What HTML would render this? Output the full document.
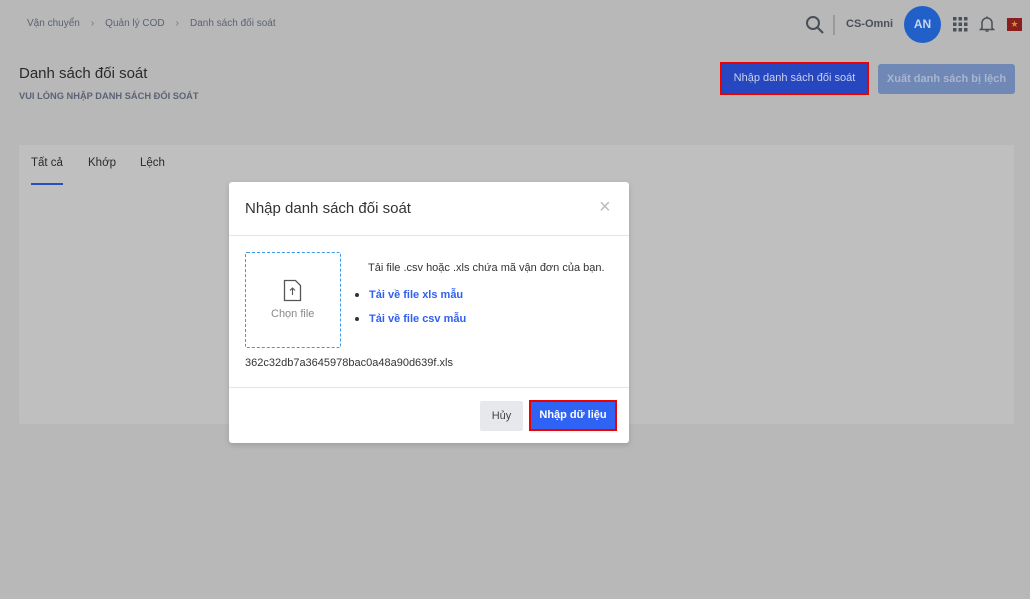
<!DOCTYPE html>
<html><head><meta charset="utf-8"><style>
*{box-sizing:border-box;margin:0;padding:0}
body{width:1030px;height:599px;background:#b8b8b8;font-family:"Liberation Sans",sans-serif;position:relative;overflow:hidden;color:#333}
.a{position:absolute}
.bc{top:18px;left:27px;font-size:10px;color:#5a6274}
.bc span{margin:0 11px;color:#777}
.title{top:65px;left:19px;font-size:15px;color:#2a2a2a}
.sub{top:91px;left:19px;font-size:9.3px;font-weight:bold;color:#5a6274}
.card{left:19px;top:145px;width:995px;height:279px;background:#bfbfbf;border-radius:2px}
.tab{top:157px;font-size:11.5px;color:#2a2a2a}
.btn1{left:720px;top:62px;width:149px;height:33px;background:#2647c0;border:2px solid #e00;color:#c9d2ee;font-size:11px;text-align:center;line-height:29px}
.btn2{left:878px;top:64px;width:137px;height:30px;background:#7088b5;border-radius:3px;color:#a9b6cf;font-size:11px;text-align:center;line-height:30px;font-weight:bold}
.modal{left:229px;top:182px;width:400px;height:261px;background:#fff;border-radius:3px;box-shadow:0 2px 6px rgba(0,0,0,.15)}
.link{color:#3060f0;font-weight:bold;font-size:11px}
</style></head><body>
<div class="a bc">Vận chuyển<span>›</span>Quản lý COD<span>›</span>Danh sách đối soát</div>
<svg class="a" style="left:805px;top:15px" width="20" height="20" viewBox="0 0 20 20"><circle cx="8" cy="8" r="6" fill="none" stroke="#4a4f5a" stroke-width="2"/><path d="M12.5 12.5L18 18" stroke="#4a4f5a" stroke-width="2.2"/></svg>
<div class="a" style="left:833px;top:15px;width:2px;height:20px;background:#9a9a9a"></div>
<div class="a" style="left:846px;top:18px;font-size:11px;font-weight:bold;color:#4a4f5a">CS-Omni</div>
<div class="a" style="left:904px;top:6px;width:37px;height:37px;border-radius:50%;background:#2160c8;color:#c9d6ee;font-size:12px;font-weight:bold;text-align:center;line-height:37px">AN</div>
<svg class="a" style="left:953px;top:17px" width="15" height="15"><g fill="#4a4f5a"><rect x="0" y="0" width="3.5" height="3.5"/><rect x="5.5" y="0" width="3.5" height="3.5"/><rect x="11" y="0" width="3.5" height="3.5"/><rect x="0" y="5.5" width="3.5" height="3.5"/><rect x="5.5" y="5.5" width="3.5" height="3.5"/><rect x="11" y="5.5" width="3.5" height="3.5"/><rect x="0" y="11" width="3.5" height="3.5"/><rect x="5.5" y="11" width="3.5" height="3.5"/><rect x="11" y="11" width="3.5" height="3.5"/></g></svg>
<svg class="a" style="left:979px;top:15px" width="16" height="18" viewBox="0 0 16 18"><path d="M3 13V8a5 5 0 0 1 10 0v5l1.5 1.5h-13z" fill="none" stroke="#4a4f5a" stroke-width="1.5"/><path d="M6.5 16h3" stroke="#4a4f5a" stroke-width="1.5"/><path d="M8 1.5v1.5" stroke="#4a4f5a" stroke-width="1.5"/></svg>
<div class="a" style="left:1007px;top:18px;width:15px;height:13px;background:#8a1e1e;color:#b8a020;font-size:9px;text-align:center;line-height:13px">★</div>
<div class="a title">Danh sách đối soát</div>
<div class="a sub">VUI LÒNG NHẬP DANH SÁCH ĐỐI SOÁT</div>
<div class="a btn1">Nhập danh sách đối soát</div>
<div class="a btn2">Xuất danh sách bị lệch</div>
<div class="a card"></div>
<div class="a tab" style="left:31px">Tất cả</div>
<div class="a" style="left:31px;top:183px;width:32px;height:2px;background:#2a50c0"></div>
<div class="a tab" style="left:88px">Khớp</div>
<div class="a tab" style="left:140px">Lệch</div>
<div class="a modal">
 <div class="a" style="left:16px;top:18px;font-size:15px;color:#333">Nhập danh sách đối soát</div>
 <div class="a" style="left:370px;top:14px;font-size:20px;color:#bbb;font-weight:300">×</div>
 <div class="a" style="left:0;top:53px;width:400px;height:1px;background:#e4e4e4"></div>
 <div class="a" style="left:16px;top:70px;width:96px;height:96px;border:1px dashed #3a9ae8;border-radius:2px"></div>
 <svg class="a" style="left:54px;top:97px" width="20" height="24" viewBox="0 0 20 24"><path d="M1.5 1.5h11l5 5v15h-16z" fill="none" stroke="#555" stroke-width="1.3"/><path d="M9.5 16V9M7 11.5l2.5-2.5 2.5 2.5" fill="none" stroke="#555" stroke-width="1.1"/></svg>
 <div class="a" style="left:42px;top:126px;font-size:11px;color:#888">Chọn file</div>
 <div class="a" style="left:139px;top:80px;font-size:11px;color:#333">Tải file .csv hoặc .xls chứa mã vận đơn của bạn.</div>
 <div class="a" style="left:126px;top:111px;width:4px;height:4px;border-radius:50%;background:#333"></div>
 <div class="a link" style="left:140px;top:108px;line-height:1">Tải về file xls mẫu</div>
 <div class="a" style="left:126px;top:135px;width:4px;height:4px;border-radius:50%;background:#333"></div>
 <div class="a link" style="left:140px;top:132px;line-height:1">Tải về file csv mẫu</div>
 <div class="a" style="left:16px;top:175px;font-size:11px;color:#333">362c32db7a3645978bac0a48a90d639f.xls</div>
 <div class="a" style="left:0;top:205px;width:400px;height:1px;background:#e4e4e4"></div>
 <div class="a" style="left:251px;top:219px;width:43px;height:30px;background:#e6e8ec;border-radius:2px;font-size:11px;color:#444;text-align:center;line-height:30px">Hủy</div>
 <div class="a" style="left:300px;top:218px;width:88px;height:31px;background:#2f63f5;border:2px solid #e00;color:#fff;font-size:11px;font-weight:bold;text-align:center;line-height:27px">Nhập dữ liệu</div>
</div>
</body></html>
